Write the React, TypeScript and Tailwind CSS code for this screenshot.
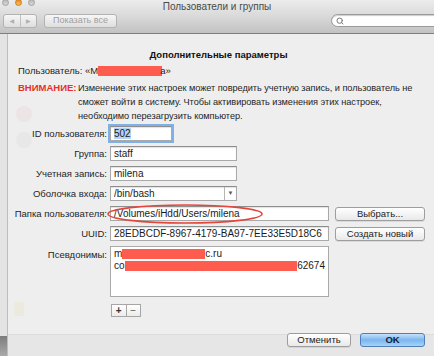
import { Search } from "lucide-react"

const font = { fontFamily: '"Liberation Sans", "DejaVu Sans", Arial, sans-serif' }

function Field({ children, className = "" }: { children?: React.ReactNode; className?: string }) {
  return (
    <div
      className={`h-[15px] bg-white border border-[#a9a9a9] border-t-[#8e8e8e] shadow-[inset_0_1px_1px_rgba(0,0,0,0.12)] px-[3px] text-[10px] leading-[13px] text-[#1b1b1b] whitespace-nowrap overflow-hidden ${className}`}
    >
      {children}
    </div>
  )
}

function Btn({ children, className = "" }: { children: React.ReactNode; className?: string }) {
  return (
    <div
      className={`h-[14px] rounded-[3px] border border-[#9d9d9d] bg-gradient-to-b from-white to-[#e9e9e9] shadow-[0_1px_0_rgba(0,0,0,0.08)] flex items-center justify-center text-[9.5px] text-[#222] ${className}`}
    >
      {children}
    </div>
  )
}

function Row({ label, children }: { label: string; children: React.ReactNode }) {
  return (
    <div className="flex items-center h-[15px]">
      <div className="w-[89px] flex justify-end whitespace-nowrap text-[9.5px] text-[#1e1e1e]">{label}</div>
      <div className="ml-[3px] flex items-center">{children}</div>
    </div>
  )
}

export default function App() {
  return (
    <div className="w-[434px] h-[356px] overflow-hidden relative bg-[#e4e4e4] select-none" style={font}>
      {/* toolbar */}
      <div className="h-[34px] bg-gradient-to-b from-[#ececec] via-[#d9d9d9] to-[#c2c2c2] border-b border-[#7f7f7f] relative">
        <div className="absolute left-[2px] -top-[1px] flex gap-[6px]">
          <div className="w-[7px] h-[7px] rounded-full bg-gradient-to-b from-[#b8b8b8] to-[#d8d8d8] border border-[#a0a0a0]" />
          <div className="w-[7px] h-[7px] rounded-full bg-gradient-to-b from-[#e88b1c] to-[#f7c160] border border-[#c87a18]" />
          <div className="w-[7px] h-[7px] rounded-full bg-gradient-to-b from-[#b8b8b8] to-[#d8d8d8] border border-[#a0a0a0]" />
        </div>
        <div className="absolute left-0 right-0 -top-[1px] text-center text-[10px] text-[#4a4a4a]">
          Пользователи и группы
        </div>
        <div className="absolute left-[3px] top-[14px] w-[34px] h-[14px] rounded-[3px] border border-[#b3b3b3] bg-gradient-to-b from-[#f6f6f6] to-[#dedede] flex">
          <div className="flex-1 flex items-center justify-center text-[6px] text-[#b0b0b0] border-r border-[#c0c0c0]">◀</div>
          <div className="flex-1 flex items-center justify-center text-[6px] text-[#b0b0b0]">▶</div>
        </div>
        <div className="absolute left-[44px] top-[14px] w-[73px] h-[14px] rounded-[3px] border border-[#b3b3b3] bg-gradient-to-b from-[#f6f6f6] to-[#dedede] flex items-center justify-center text-[9px] text-[#9f9f9f]">
          Показать все
        </div>
        <div className="absolute left-[331px] top-[14px] w-[120px] h-[13px] rounded-full border border-[#9a9a9a] bg-white shadow-[inset_0_1px_1px_rgba(0,0,0,0.2)] flex items-center pl-[4px]">
          <Search className="w-[8px] h-[8px] text-[#777]" strokeWidth={3} />
        </div>
      </div>

      <div className="flex h-[322px]">
        {/* window strip on the left */}
        <div className="w-[8px] flex flex-col border-r border-[#bdbdbd]">
          <div className="flex-1 bg-[#e3e3e3]" />
          <div className="h-[20px] bg-gradient-to-b from-[#7d7d7d] to-[#a9a9a9]" />
        </div>

        {/* sheet */}
        <div className="flex-1 flex flex-col bg-[#eeeeee] relative">
          {/* faint window content behind the sheet */}
          <div className="absolute left-[8px] top-[72px] w-[16px] h-[16px] rounded-full bg-[#ecdcdc] opacity-50" />
          <div className="absolute left-[8px] top-[98px] w-[16px] h-[16px] rounded-full bg-[#e2e2e2] opacity-50" />
          <div className="absolute left-[6px] top-[268px] w-[10px] h-[14px] rounded-[2px] bg-[#ebe6d6] opacity-60" />

          <div className="flex-1 pl-[10px] pr-[9px] pt-[14px] flex flex-col relative">
            <div className="text-center text-[9.5px] font-bold text-[#111] pr-[6px]">Дополнительные параметры</div>

            <div className="mt-[3px] text-[9.5px] text-[#1e1e1e] flex items-center h-[12px]">
              Пользователь: «М<span className="inline-block w-[64px] h-[10px] bg-[#ff5c50]" />
              <span className="-ml-[2px]">а»</span>
            </div>

            <div className="mt-[4px] flex text-[9.5px] leading-[14px]">
              <div className="w-[60px] font-bold text-[#e6302b]">ВНИМАНИЕ:</div>
              <div className="flex-1 text-[#1e1e1e] text-[9.2px] tracking-[-0.05px]">
                Изменение этих настроек может повредить учетную запись, и пользователь не сможет войти в систему. Чтобы
                активировать изменения этих настроек, необходимо перезагрузить компьютер.
              </div>
            </div>

            <div className="mt-[3px] flex flex-col gap-[5px]">
              <Row label="ID пользователя:">
                <Field className="w-[62px] outline outline-2 outline-[#7fb1e6]">
                  <span className="bg-[#b5d3f3]">502</span>
                </Field>
              </Row>
              <Row label="Группа:">
                <Field className="w-[127px]">staff</Field>
              </Row>
              <Row label="Учетная запись:">
                <Field className="w-[127px]">milena</Field>
              </Row>
              <Row label="Оболочка входа:">
                <Field className="w-[127px] flex !px-0">
                  <span className="flex-1 pl-[3px]">/bin/bash</span>
                  <span className="w-[12px] border-l border-[#b5b5b5] flex items-center justify-center text-[6px] text-[#555]">
                    ▼
                  </span>
                </Field>
              </Row>
              <Row label="Папка пользователя:">
                <Field className="w-[219px]">/Volumes/iHdd/Users/milena</Field>
                <Btn className="ml-[6px] w-[90px]">Выбрать...</Btn>
              </Row>
              <Row label="UUID:">
                <Field className="w-[219px]">28EDBCDF-8967-4179-BA97-7EE33E5D18C6</Field>
                <Btn className="ml-[6px] w-[90px]">Создать новый</Btn>
              </Row>
              <div className="flex">
                <div className="w-[89px] flex justify-end text-[9.5px] text-[#1e1e1e] pt-[2px]">Псевдонимы:</div>
                <div className="ml-[3px] w-[219px] h-[51px] bg-white border border-[#a9a9a9] px-[3px] pt-[1px] text-[10px] leading-[12px] text-[#1b1b1b]">
                  <div className="flex items-center">
                    m<span className="inline-block w-[83px] h-[10px] bg-[#ff5c50]" />
                    c.ru
                  </div>
                  <div className="flex items-center">
                    co<span className="inline-block w-[174px] h-[10px] bg-[#ff5c50]" />
                    62674
                  </div>
                </div>
              </div>
            </div>

            <div className="ml-[93px] mt-[7px] flex w-[30px] h-[13px] border border-[#a6a6a6] bg-gradient-to-b from-white to-[#ebebeb]">
              <div className="flex-1 flex items-center justify-center text-[10px] font-bold text-[#333] border-r border-[#a6a6a6] leading-none">+</div>
              <div className="flex-1 flex items-center justify-center text-[10px] text-[#555] leading-none">−</div>
            </div>
          </div>

          {/* bottom bar */}
          <div className="h-[22px] bg-[#e6e6e6] border-t border-[#dcdcdc] flex items-start justify-end pr-[9px] gap-[9px] relative">
            <Btn className="w-[64px] h-[14px] -mt-[2px]">Отменить</Btn>
            <div className="w-[65px] h-[14px] -mt-[2px] rounded-[3px] border border-[#4f7fb8] bg-gradient-to-b from-[#c5e1fb] via-[#7ab6ee] to-[#a9d2f7] flex items-center justify-center text-[9.5px] font-bold text-[#10233a]">
              OK
            </div>
          </div>

          {/* annotation ellipse */}
          <svg className="absolute left-[98px] top-[169px] pointer-events-none" width="158" height="22" viewBox="0 0 158 22">
            <ellipse cx="79" cy="11" rx="77" ry="9" fill="none" stroke="#e3463b" strokeWidth="1.6" />
          </svg>
        </div>
      </div>
    </div>
  )
}
